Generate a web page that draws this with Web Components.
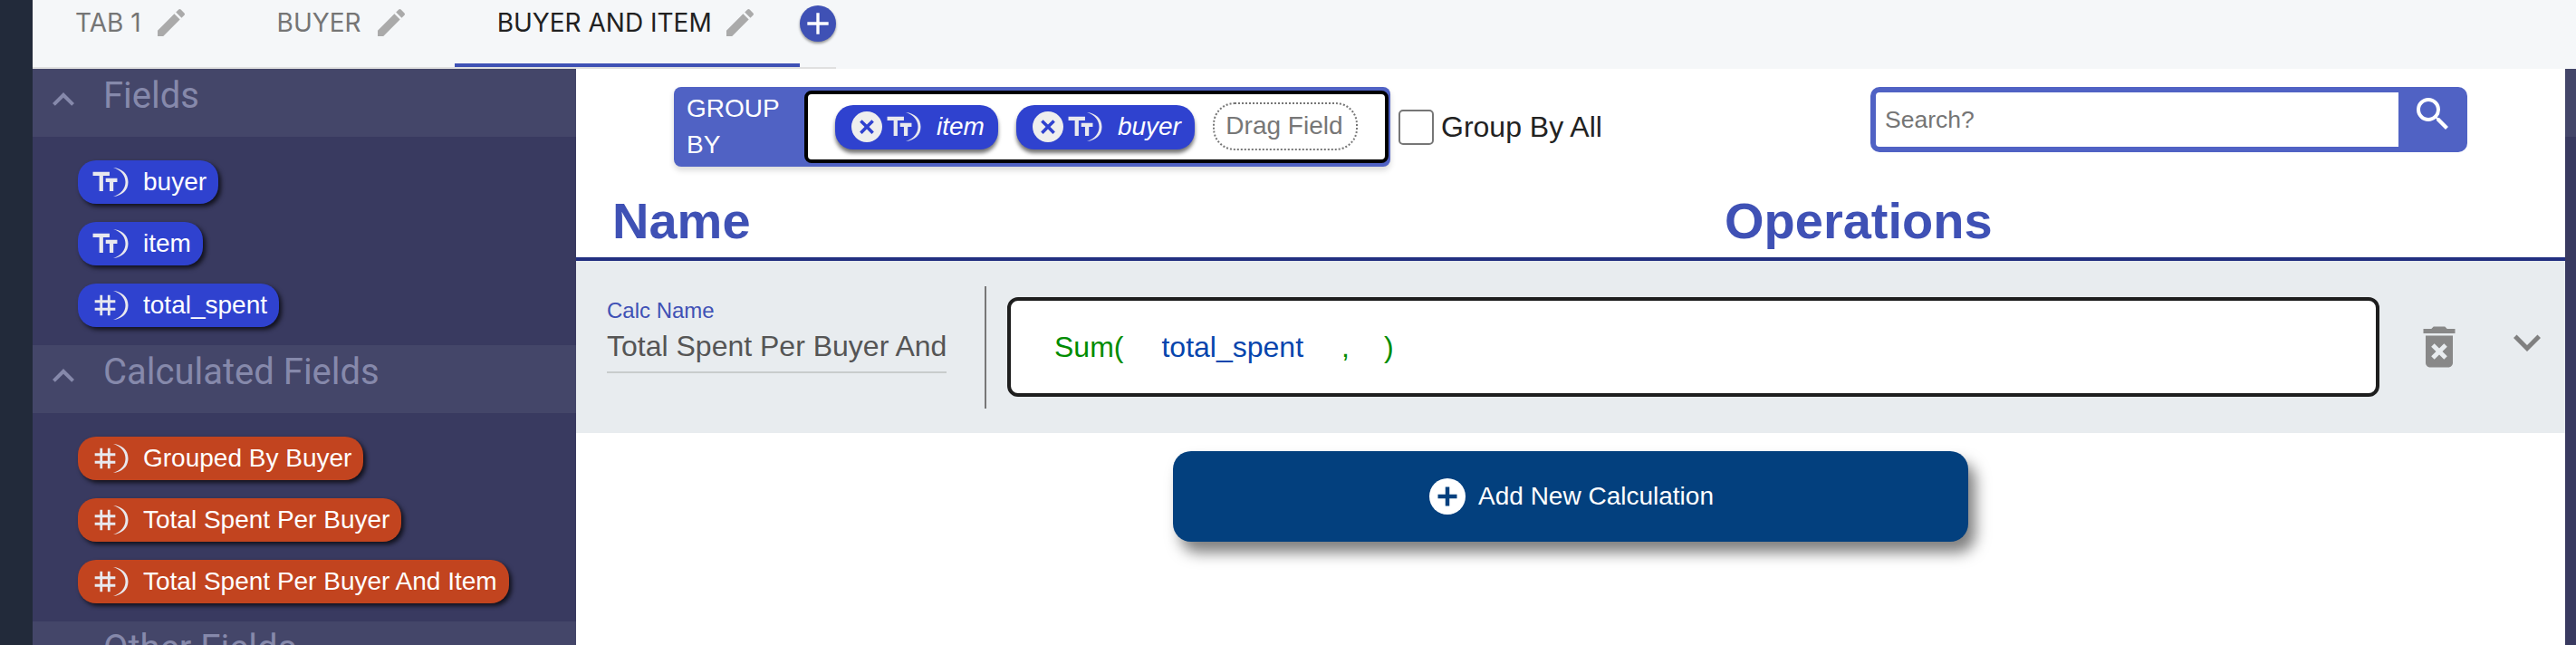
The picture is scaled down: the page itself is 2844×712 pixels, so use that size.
<!DOCTYPE html>
<html>
<head>
<meta charset="utf-8">
<title>Calculations</title>
<style>
    html, body {
        margin: 0;
        height: 100%;
        overflow: hidden;
        background: white;
        font-family: "Liberation Sans", Arial, sans-serif;
    }
</style>
</head>
<body>
<calc-app>
    <tab-bar slot="tabs">
        <tab-item>TAB 1</tab-item>
        <tab-item>BUYER</tab-item>
        <tab-item active>BUYER AND ITEM</tab-item>
    </tab-bar>
    <side-panel slot="side">
        <panel-section title="Fields">
            <field-chip kind="text">buyer</field-chip>
            <field-chip kind="text">item</field-chip>
            <field-chip kind="number">total_spent</field-chip>
        </panel-section>
        <panel-section title="Calculated Fields">
            <field-chip kind="number" calc>Grouped By Buyer</field-chip>
            <field-chip kind="number" calc>Total Spent Per Buyer</field-chip>
            <field-chip kind="number" calc>Total Spent Per Buyer And Item</field-chip>
        </panel-section>
        <panel-section title="Other Fields"></panel-section>
    </side-panel>
    <calc-toolbar slot="main">
        <group-by>
            <field-chip kind="text" removable>item</field-chip>
            <field-chip kind="text" removable>buyer</field-chip>
        </group-by>
        <search-box></search-box>
    </calc-toolbar>
    <calc-header slot="main"></calc-header>
    <calc-row slot="main" name="Total Spent Per Buyer And Item"></calc-row>
    <add-button slot="main">Add New Calculation</add-button>
</calc-app>

<script>
const ICONS = {
    edit: 'M3 17.25V21h3.75L17.81 9.94l-3.75-3.75L3 17.25zM20.71 7.04a1 1 0 0 0 0-1.41l-2.34-2.34a1 1 0 0 0-1.41 0l-1.83 1.83 3.75 3.75 1.83-1.83z',
    text: 'M2.5 4v3h5v12h3V7h5V4h-13zm19 5h-9v3h3v7h3v-7h3V9z',
    number: 'M20 10V8h-4V4h-2v4h-4V4H8v4H4v2h4v4H4v2h4v4h2v-4h4v4h2v-4h4v-2h-4v-4h4zm-6 4h-4v-4h4v4z',
    up: 'M12 8l-6 6 1.41 1.41L12 10.83l4.59 4.58L18 14z',
    down: 'M16.59 8.59L12 13.17 7.41 8.59 6 10l6 6 6-6z',
    search: 'M15.5 14h-.79l-.28-.27A6.47 6.47 0 0 0 16 9.5 6.5 6.5 0 1 0 9.5 16c1.61 0 3.09-.59 4.23-1.57l.27.28v.79l5 4.99L20.49 19l-4.99-5zm-6 0C7.01 14 5 11.99 5 9.5S7.01 5 9.5 5 14 7.01 14 9.5 11.99 14 9.5 14z',
    trash: 'M6 19c0 1.1.9 2 2 2h8c1.1 0 2-.9 2-2V7H6v12zm2.46-7.12l1.41-1.41L12 12.59l2.12-2.12 1.41 1.41L13.41 14l2.12 2.12-1.41 1.41L12 15.41l-2.12 2.12-1.41-1.41L10.59 14l-2.13-2.12zM15.5 4l-1-1h-5l-1 1H5v2h14V4z',
    plus: 'M19 13h-6v6h-2v-6H5v-2h6V5h2v6h6v2z',
    plusBold: 'M19 13.5h-5.5V19h-3v-5.5H5v-3h5.5V5h3v5.5H19v3z',
    close: 'M18.3 7.7L16.3 5.7 12 10 7.7 5.7 5.7 7.7 10 12l-4.3 4.3 2 2L12 14l4.3 4.3 2-2L14 12z'
};

function icon(name, size, color) {
    return `<svg width="${size}" height="${size}" viewBox="0 0 24 24" fill="${color}" style="display:block;flex:none"><path d="${ICONS[name]}"/></svg>`;
}

class CalcApp extends HTMLElement {
    constructor() {
        super();
        this.attachShadow({mode: 'open'});
        this.shadowRoot.innerHTML = `
            <style>
                :host {
                    display: grid;
                    grid-template-columns: 36px 600px 1fr 12px;
                    grid-template-rows: 76px 636px;
                    width: 2844px;
                    height: 712px;
                    overflow: hidden;
                }
                .rail { grid-row: 1 / 3; background: #222a3a; }
                .top { grid-column: 2 / 5; background: #f5f7f9; }
                .main { min-width: 0; overflow: hidden; }
                .edge { background: #393a60; }
                .edge div { height: 75px; background: #444669; }
            </style>
            <div class="rail"></div>
            <div class="top"><slot name="tabs"></slot></div>
            <slot name="side"></slot>
            <div class="main"><slot name="main"></slot></div>
            <div class="edge"><div></div></div>
        `;
    }
}

class TabBar extends HTMLElement {
    constructor() {
        super();
        this.attachShadow({mode: 'open'});
        this.shadowRoot.innerHTML = `
            <style>
                :host {
                    display: flex;
                    width: max-content;
                    height: 76px;
                    box-sizing: border-box;
                    border-bottom: 2px solid #e0e0e0;
                }
                .add {
                    width: 40px;
                    height: 40px;
                    margin-top: 6px;
                    border-radius: 50%;
                    background: #3f51b5;
                    box-shadow: 0 2px 3px rgba(0, 0, 0, 0.4);
                    display: flex;
                    align-items: center;
                    justify-content: center;
                }
            </style>
            <slot></slot>
            <div class="add">${icon('plus', 40, '#fff')}</div>
        `;
    }
}

class TabItem extends HTMLElement {
    constructor() {
        super();
        this.attachShadow({mode: 'open'});
        this.shadowRoot.innerHTML = `
            <style>
                :host {
                    display: flex;
                    height: 74px;
                    box-sizing: border-box;
                    padding: 5px 50px 0 47px;
                    font: 400 28px Inter, sans-serif;
                    color: #757575;
                    border-bottom: 4px solid transparent;
                }
                :host([active]) {
                    padding-right: 46px;
                    color: #212121;
                    border-bottom-color: #3f51b5;
                }
                span { line-height: 40px; margin-right: 13px; white-space: nowrap; }
                :host([active]) span { margin-right: 11px; }
            </style>
            <span><slot></slot></span>
            ${icon('edit', 40, '#aaa')}
        `;
    }
}

class SidePanel extends HTMLElement {
    constructor() {
        super();
        this.attachShadow({mode: 'open'});
        this.shadowRoot.innerHTML = `
            <style>
                :host {
                    display: block;
                    background: #393a60;
                    overflow: hidden;
                }
            </style>
            <slot></slot>
        `;
    }
}

class PanelSection extends HTMLElement {
    constructor() {
        super();
        this.attachShadow({mode: 'open'});
        this.shadowRoot.innerHTML = `
            <style>
                :host { display: block; }
                .head {
                    display: flex;
                    align-items: flex-start;
                    height: 75px;
                    box-sizing: border-box;
                    padding: 6px 0 0 10px;
                    background: #444669;
                    color: #8689ab;
                    font: 400 40px/48px Roboto, sans-serif;
                }
                .chev { margin: 4px 20px 0 0; }
                .list {
                    display: flex;
                    flex-direction: column;
                    align-items: flex-start;
                    gap: 20px;
                    padding: 26px 0 20px 50px;
                }
            </style>
            <div class="head">
                <div class="chev">${icon('up', 48, '#8689ab')}</div>
                <span>${this.getAttribute('title')}</span>
            </div>
            <div class="list"><slot></slot></div>
        `;
    }
}

class FieldChip extends HTMLElement {
    constructor() {
        super();
        this.attachShadow({mode: 'open'});
        const kind = this.getAttribute('kind');
        const close = this.hasAttribute('removable')
            ? `<div class="close">${icon('close', 30, '#2f42cf')}</div>` : '';
        this.shadowRoot.innerHTML = `
            <style>
                :host {
                    display: inline-flex;
                    align-items: center;
                    height: 48px;
                    box-sizing: border-box;
                    padding: 0 13px 0 13px;
                    border-radius: 20px;
                    background: #2f42cf;
                    color: #fff;
                    font: 400 28px "Liberation Sans", sans-serif;
                    white-space: nowrap;
                    box-shadow: 3px 3px 5px rgba(0, 0, 0, 0.7);
                }
                :host([calc]) { background: #c2441f; }
                :host([removable]) {
                    height: 49px;
                    padding: 0 15px 0 18px;
                    font-style: italic;
                    box-shadow: 0 4px 4px rgba(0, 0, 0, 0.55);
                }
                .type { flex: none; }
                .moon { flex: none; margin: 0 15px 0 -10px; }
                .close {
                    flex: none;
                    width: 34px;
                    height: 34px;
                    margin-right: 2px;
                    border-radius: 50%;
                    background: #eee;
                    display: flex;
                    align-items: center;
                    justify-content: center;
                }
                :host([removable]) .type { width: 34px; }
                :host([removable]) .moon { margin: 0 16px 0 -12px; }
            </style>
            ${close}
            <div class="type">${icon(kind, 34, '#e8e8ee')}</div>
            <svg class="moon" width="20" height="32" viewBox="0 0 20 32" fill="#e8e8ee"><path d="M2 0C12 1 18.5 7 18.5 16S12 31 2 32C11 29 15.5 23 15.5 16S11 3 2 0Z"/></svg>
            <slot></slot>
        `;
    }
}

class CalcToolbar extends HTMLElement {
    constructor() {
        super();
        this.attachShadow({mode: 'open'});
        this.shadowRoot.innerHTML = `
            <style>
                :host {
                    display: flex;
                    justify-content: space-between;
                    align-items: flex-start;
                    padding: 20px 108px 0 108px;
                }
            </style>
            <slot></slot>
        `;
    }
}

class GroupBy extends HTMLElement {
    constructor() {
        super();
        this.attachShadow({mode: 'open'});
        this.shadowRoot.innerHTML = `
            <style>
                :host { display: flex; align-items: center; }
                .box {
                    display: flex;
                    width: 791px;
                    height: 88px;
                    box-sizing: border-box;
                    padding: 4px 2px 4px 0;
                    border-radius: 8px;
                    background: #5062c4;
                    box-shadow: 0 4px 6px rgba(0, 0, 0, 0.15);
                }
                .label {
                    width: 144px;
                    box-sizing: border-box;
                    padding: 0 12px 0 14px;
                    align-self: center;
                    color: #fff;
                    font-size: 28px;
                    line-height: 40px;
                }
                .drop {
                    flex: 1;
                    display: flex;
                    align-items: center;
                    gap: 20px;
                    box-sizing: border-box;
                    padding: 0 0 0 30px;
                    background: #fff;
                    border: 4px solid #000;
                    border-radius: 8px;
                }
                .drag {
                    height: 53px;
                    width: 160px;
                    box-sizing: border-box;
                    margin-top: -2px;
                    padding-right: 2px;
                    border: 2px dotted #777;
                    border-radius: 24px;
                    color: #777;
                    font-size: 28px;
                    display: flex;
                    align-items: center;
                    justify-content: center;
                }
                .check {
                    width: 39px;
                    height: 39px;
                    box-sizing: border-box;
                    margin: 0 8px 0 9px;
                    border: 2px solid #767676;
                    border-radius: 5px;
                    background: #fff;
                }
                .all { font-size: 32px; color: #222; }
            </style>
            <div class="box">
                <div class="label">GROUP BY</div>
                <div class="drop">
                    <slot></slot>
                    <div class="drag">Drag Field</div>
                </div>
            </div>
            <div class="check"></div>
            <div class="all">Group By All</div>
        `;
    }
}

class SearchBox extends HTMLElement {
    constructor() {
        super();
        this.attachShadow({mode: 'open'});
        this.shadowRoot.innerHTML = `
            <style>
                :host {
                    display: flex;
                    width: 659px;
                    height: 72px;
                    box-sizing: border-box;
                    padding: 6px 0 6px 6px;
                    border-radius: 10px;
                    background: #5062c4;
                }
                .input {
                    width: 577px;
                    box-sizing: border-box;
                    padding-left: 10px;
                    background: #fff;
                    border-radius: 4px 0 0 4px;
                    color: #757575;
                    font-size: 26.5px;
                    line-height: 60px;
                }
                .btn { flex: 1; display: flex; justify-content: center; align-items: flex-start; }
            </style>
            <div class="input">Search?</div>
            <div class="btn">${icon('search', 48, '#fff')}</div>
        `;
    }
}

class CalcHeader extends HTMLElement {
    constructor() {
        super();
        this.attachShadow({mode: 'open'});
        this.shadowRoot.innerHTML = `
            <style>
                :host {
                    display: grid;
                    grid-template-columns: 1228px 1fr;
                    margin-top: 28px;
                    padding: 0 0 8px 40px;
                    border-bottom: 4px solid #222f80;
                    color: #3f51b5;
                    font-size: 56px;
                    font-weight: 700;
                    line-height: 64px;
                }
            </style>
            <div>Name</div>
            <div>Operations</div>
        `;
    }
}

class CalcRow extends HTMLElement {
    constructor() {
        super();
        this.attachShadow({mode: 'open'});
        this.shadowRoot.innerHTML = `
            <style>
                :host {
                    display: flex;
                    align-items: center;
                    height: 190px;
                    padding-left: 34px;
                    background: #e8ecef;
                }
                .name { width: 375px; flex: none; padding-bottom: 25px; }
                .cap { color: #3f51b5; font-size: 24px; line-height: 28px; }
                .val {
                    margin-top: 5px;
                    padding-bottom: 8px;
                    border-bottom: 2px solid #c8cccc;
                    color: #555;
                    font-size: 32px;
                    line-height: 40px;
                    white-space: nowrap;
                    overflow: hidden;
                }
                .bar { width: 2px; height: 135px; margin: 0 23px 0 42px; background: #777; flex: none; }
                .formula {
                    width: 1515px;
                    height: 110px;
                    flex: none;
                    box-sizing: border-box;
                    border: 4px solid #1e1e1e;
                    border-radius: 12px;
                    background: #fff;
                    display: flex;
                    align-items: center;
                    padding-left: 48px;
                    font-size: 32px;
                    color: #008c00;
                }
                .f { color: #0645ad; margin: 0 42px 0 42px; }
                .c { margin-right: 38px; }
                .del { margin-left: 36px; }
                .more { margin: 0 0 10px 37px; }
            </style>
            <div class="name">
                <div class="cap">Calc Name</div>
                <div class="val">${this.getAttribute('name')}</div>
            </div>
            <div class="bar"></div>
            <div class="formula">
                <span>Sum(</span><span class="f">total_spent</span><span class="c">,</span><span>)</span>
            </div>
            <div class="del">${icon('trash', 60, '#888')}</div>
            <div class="more">${icon('down', 60, '#808080')}</div>
        `;
    }
}

class AddButton extends HTMLElement {
    constructor() {
        super();
        this.attachShadow({mode: 'open'});
        this.shadowRoot.innerHTML = `
            <style>
                :host {
                    display: flex;
                    align-items: center;
                    justify-content: center;
                    gap: 14px;
                    width: 878px;
                    height: 100px;
                    box-sizing: border-box;
                    padding-left: 2px;
                    margin: 20px 0 0 659px;
                    border-radius: 20px;
                    background: #03407e;
                    color: #fff;
                    font-size: 28px;
                    box-shadow: 8px 12px 16px rgba(0, 0, 0, 0.5);
                }
                .dot {
                    width: 40px;
                    height: 40px;
                    border-radius: 50%;
                    background: #fff;
                    display: flex;
                    align-items: center;
                    justify-content: center;
                }
            </style>
            <div class="dot">${icon('plusBold', 36, '#03407e')}</div>
            <slot></slot>
        `;
    }
}

customElements.define('calc-app', CalcApp);
customElements.define('tab-bar', TabBar);
customElements.define('tab-item', TabItem);
customElements.define('side-panel', SidePanel);
customElements.define('panel-section', PanelSection);
customElements.define('field-chip', FieldChip);
customElements.define('calc-toolbar', CalcToolbar);
customElements.define('group-by', GroupBy);
customElements.define('search-box', SearchBox);
customElements.define('calc-header', CalcHeader);
customElements.define('calc-row', CalcRow);
customElements.define('add-button', AddButton);
</script>
</body>
</html>
